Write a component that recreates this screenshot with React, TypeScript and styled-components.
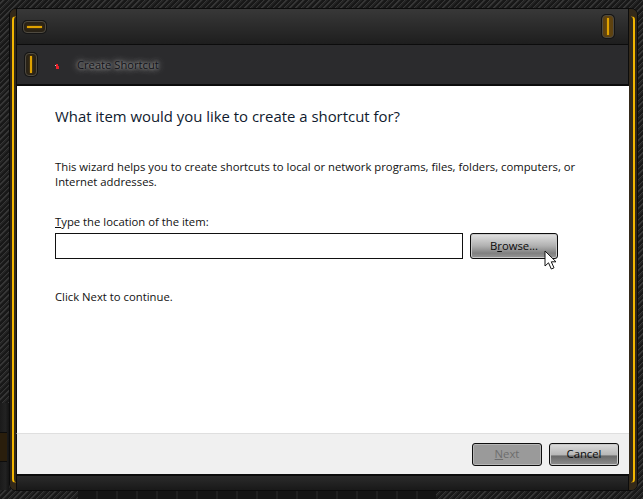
import React from "react";
import styled, { createGlobalStyle } from "styled-components";

const Global = createGlobalStyle`
  html, body { margin: 0; padding: 0; }
  body { width: 643px; height: 499px; overflow: hidden; font-family: "Open Sans", "Noto Sans", sans-serif; }
  #root { width: 643px; height: 499px; }
`;

const Desktop = styled.div`
  position: relative;
  width: 643px;
  height: 499px;
  box-sizing: border-box;
  padding: 8px 5px 8px 9px;
  background: repeating-linear-gradient(135deg, #181818 0 2px, #363636 2px 3px, #242424 3px 4px);
`;

const EdgePanel = styled.div`
  position: absolute;
  left: 0;
  top: 403px;
  width: 9px;
  height: 87px;
  background: linear-gradient(90deg, #1a1a1a, #222 60%, #141414);
  &::after {
    content: "";
    position: absolute;
    left: 0;
    right: 2px;
    top: 29px;
    height: 28px;
    background: #2a1e0c;
    border-top: 1px solid #0c0c0c;
    border-bottom: 1px solid #0c0c0c;
  }
`;

const BottomPanel = styled.div`
  position: absolute;
  left: 78px;
  top: 491px;
  width: 358px;
  height: 8px;
  background: repeating-linear-gradient(90deg, #141414 0 18px, #1f1f1f 18px 20px);
`;

const Frame = styled.div`
  position: relative;
  width: 629px;
  height: 483px;
  box-sizing: border-box;
  display: grid;
  grid-template-columns: 6px 1fr 8px;
  background: #2a2a2a;
  border-radius: 7px;
  overflow: hidden;
  border: 1px solid #0b0b0b;
`;

const Rail = styled.div<{ $side: "left" | "right" }>`
  position: relative;
  background: #33291a;
  &::after {
    content: "";
    position: absolute;
    top: 7px;
    bottom: 7px;
    ${(p) => (p.$side === "left" ? "left: 2px; border-left: 2px solid #f2b600; border-top-left-radius: 5px; border-bottom-left-radius: 5px;" : "right: 2px; border-right: 2px solid #f2b600; border-top-right-radius: 5px; border-bottom-right-radius: 5px;")}
    width: 4px;
    border-top: 1px solid #7a5a10;
    border-bottom: 1px solid #7a5a10;
    box-sizing: border-box;
  }
`;

const Main = styled.div`
  display: flex;
  flex-direction: column;
  min-width: 0;
`;

const TopBar = styled.div`
  height: 36px;
  flex: none;
  box-sizing: border-box;
  display: flex;
  align-items: center;
  justify-content: space-between;
  padding: 0 14px 0 6px;
  background: linear-gradient(#383838, #1e1e1e);
  border-bottom: 1px solid #0c0c0c;
  border-left: 1px solid #0c0c0c;
  border-right: 1px solid #0c0c0c;
`;

const Capsule = styled.div<{ $vertical?: boolean; $lit?: boolean }>`
  position: relative;
  box-sizing: border-box;
  width: ${(p) => (p.$vertical ? "12px" : "23px")};
  height: ${(p) => (p.$vertical ? "23px" : "12px")};
  border-radius: 4px;
  background: ${(p) => (p.$lit ? "#5e4210" : "#2a2317")};
  border: 1px solid #4f4a40;
  box-shadow: 0 0 0 1px #151515;
  &::after {
    content: "";
    position: absolute;
    background: #e0a200;
    box-shadow: 0 0 2px #8a6208;
    ${(p) =>
      p.$vertical
        ? "left: 4px; top: 2px; bottom: 2px; width: 2px;"
        : "left: 3px; right: 3px; top: 4px; height: 2px;"}
  }
`;

const Header = styled.div`
  height: 41px;
  flex: none;
  box-sizing: border-box;
  display: flex;
  align-items: center;
  padding: 0 0 0 8px;
  background: #2b2b2d;
  border-bottom: 2px solid #0c0c0c;
  border-left: 1px solid #0c0c0c;
  border-right: 1px solid #0c0c0c;
`;

const TinyIcon = styled.svg`
  width: 4px;
  height: 5px;
  margin: 3px 18px 0 18px;
  flex: none;
`;

const HeaderTitle = styled.div`
  font-size: 11.2px;
  color: #111116;
  text-shadow: 0 0 3px #a0a0a0, 0 0 6px #9a9a9a, 0 0 8px #808080;
`;

const Content = styled.div`
  flex: 1;
  min-height: 0;
  background: #fff;
  padding: 20px 0 0 38px;
  font-size: 11.3px;
  border-left: 1px solid #0c0c0c;
`;

const Heading = styled.h1`
  margin: 0 0 33px;
  font-weight: 400;
  font-size: 14.9px;
  line-height: 20px;
  color: #0f1a2e;
`;

const Paragraph = styled.p`
  margin: 0 0 25px;
  line-height: 15px;
  width: 540px;
  color: #111;
`;

const Label = styled.label`
  display: block;
  line-height: 15px;
  margin-bottom: 4px;
  color: #111;
`;

const Key = styled.span`
  text-decoration: underline;
`;

const Row = styled.div`
  display: flex;
  gap: 7px;
  align-items: center;
  margin-bottom: 30px;
`;

const Field = styled.div`
  width: 408px;
  height: 26px;
  box-sizing: border-box;
  background: #fff;
  border: 1px solid #111;
`;

const Button = styled.button<{ $tone: "soft" | "sharp" | "off" }>`
  box-sizing: border-box;
  height: 26px;
  padding: 0 0 2px;
  border-radius: 3px;
  font: 11.3px "Open Sans", sans-serif;
  border: 1px solid #0d0d0d;
  box-shadow: inset 0 0 0 1px ${(p) => (p.$tone === "off" ? "#b5b5b5" : "#c9c9c9")};
  color: ${(p) => (p.$tone === "off" ? "#6d6d6d" : "#0a0a0a")};
  background: ${(p) =>
    p.$tone === "off"
      ? "#9a9a9a"
      : p.$tone === "sharp"
        ? "linear-gradient(#dcdcdc 0%, #b8b8b8 50%, #6a6a6a 58%, #8e8e8e 100%)"
        : "linear-gradient(#e2e2e2 0%, #b0b0b0 50%, #808080 80%, #979797 100%)"};
`;

const BrowseButton = styled(Button)`
  width: 88px;
`;

const FooterButton = styled(Button)`
  width: 70px;
  height: 23px;
`;

const Footer = styled.div`
  height: 41px;
  flex: none;
  box-sizing: border-box;
  display: flex;
  justify-content: flex-end;
  align-items: center;
  gap: 7px;
  padding: 0 10px 0 0;
  background: #f0f0f0;
  border-top: 1px solid #dfdfdf;
  border-left: 1px solid #0c0c0c;
`;

const BottomBar = styled.div`
  height: 16px;
  flex: none;
  box-sizing: border-box;
  background: linear-gradient(#2b2b2b, #191919);
  border-top: 2px solid #0c0c0c;
  border-left: 1px solid #0c0c0c;
  border-right: 1px solid #0c0c0c;
`;

const Cursor = styled.svg`
  position: absolute;
  left: 544px;
  top: 250px;
  width: 14px;
  height: 21px;
`;

export default function App() {
  return (
    <Desktop>
      <Global />
      <EdgePanel />
      <BottomPanel />
      <Frame>
        <Rail $side="left" />
        <Main>
          <TopBar>
            <Capsule />
            <Capsule $vertical $lit />
          </TopBar>
          <Header>
            <Capsule $vertical />
            <TinyIcon viewBox="0 0 4 5">
              <path d="M1 0h2v2h1v3H1z" fill="#e8202a" />
              <path d="M0 1h1v1H0z" fill="#c9c9c9" />
            </TinyIcon>
            <HeaderTitle>Create Shortcut</HeaderTitle>
          </Header>
          <Content>
            <Heading>What item would you like to create a shortcut for?</Heading>
            <Paragraph>
              This wizard helps you to create shortcuts to local or network programs, files, folders, computers, or
              Internet addresses.
            </Paragraph>
            <Label>
              <Key>T</Key>ype the location of the item:
            </Label>
            <Row>
              <Field />
              <BrowseButton $tone="soft">
                B<Key>r</Key>owse...
              </BrowseButton>
            </Row>
            <Paragraph>Click Next to continue.</Paragraph>
          </Content>
          <Footer>
            <FooterButton $tone="off">
              <Key>N</Key>ext
            </FooterButton>
            <FooterButton $tone="sharp">Cancel</FooterButton>
          </Footer>
          <BottomBar />
        </Main>
        <Rail $side="right" />
      </Frame>
      <Cursor viewBox="0 0 14 21">
        <path d="M1 1v15l3.5-3.2L7.3 19l2.7-1.2-2.7-6H12z" fill="#fff" stroke="#111" strokeWidth="1" />
      </Cursor>
    </Desktop>
  );
}
